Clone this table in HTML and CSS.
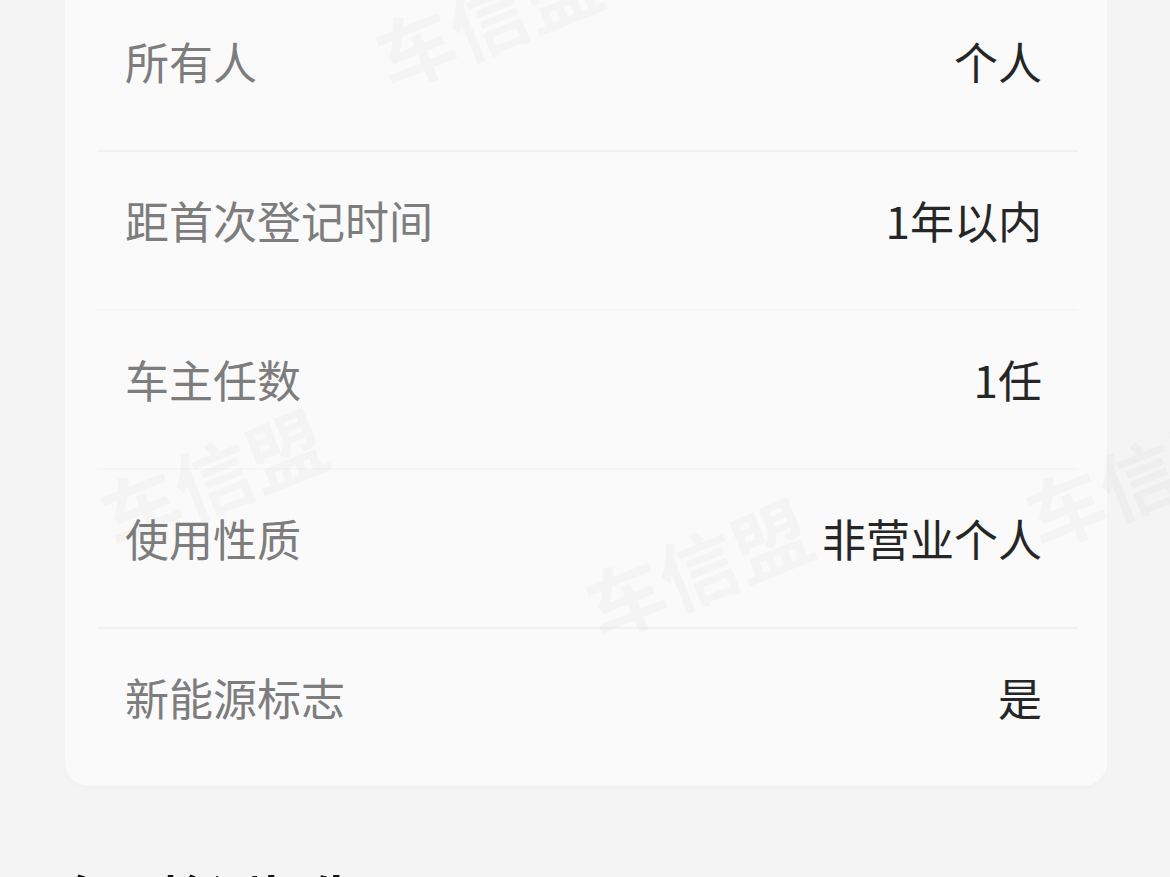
FILE: index.html
```html
<!DOCTYPE html>
<html lang="zh-CN">
<head>
<meta charset="utf-8">
<title>车辆信息</title>
<link rel="stylesheet" href="styles.css">
</head>
<body>
<div class="page">
  <section class="card">
    <div class="row"><span class="label">所有人</span><span class="value">个人</span></div>
    <div class="row row--faint"><span class="label">距首次登记时间</span><span class="value">1年以内</span></div>
    <div class="row row--faint"><span class="label">车主任数</span><span class="value">1任</span></div>
    <div class="row"><span class="label">使用性质</span><span class="value">非营业个人</span></div>
    <div class="row row--last"><span class="label">新能源标志</span><span class="value">是</span></div>
  </section>
  <h2 class="heading">车况检测报告</h2>
  <div class="wm wm-1">车信盟</div>
  <div class="wm wm-2">车信盟</div>
  <div class="wm wm-3">车信盟</div>
  <div class="wm wm-4">车信盟</div>
</div>
</body>
</html>
```

FILE: styles.css
```css
html, body {
  margin: 0;
  padding: 0;
  background: #f4f4f4;
  font-family: "Noto Sans CJK SC", "Noto Sans", sans-serif;
  overflow: hidden;
}

.page {
  position: relative;
  width: 1170px;
  height: 877px;
  overflow: hidden;
}

.card {
  margin: -27px 0 0 65px;
  width: 1042px;
  padding-top: 20px;
  background: #fafafa;
  border-radius: 24px;
  box-shadow: 0 2px 6px rgba(0, 0, 0, 0.015);
}

.row {
  height: 159px;
  margin: 0 29px 0 32px;
  padding: 0 36px 21px 28px;
  box-sizing: border-box;
  display: flex;
  align-items: center;
  justify-content: space-between;
  border-bottom: 2px solid #f1f1f1;
}

.row--faint {
  border-bottom-color: #f6f6f6;
}

.row--last {
  border-bottom: none;
  height: 157px;
}

.label {
  font-size: 44px;
  font-weight: 400;
  color: #7d7d7d;
  line-height: 1;
}

.value {
  font-size: 44px;
  font-weight: 400;
  color: #262626;
  line-height: 1;
}

.heading {
  margin: 80px 0 0 60px;
  font-size: 50px;
  font-weight: 700;
  line-height: 1.2;
  color: #111111;
}

.wm {
  position: absolute;
  font-size: 78px;
  font-weight: 700;
  color: rgba(0, 0, 0, 0.022);
  transform: rotate(-22deg);
  white-space: nowrap;
  pointer-events: none;
}

.wm-1 { left: 370px; top: -40px; }
.wm-2 { left: 95px; top: 420px; }
.wm-3 { left: 580px; top: 510px; }
.wm-4 { left: 1020px; top: 420px; }
```
